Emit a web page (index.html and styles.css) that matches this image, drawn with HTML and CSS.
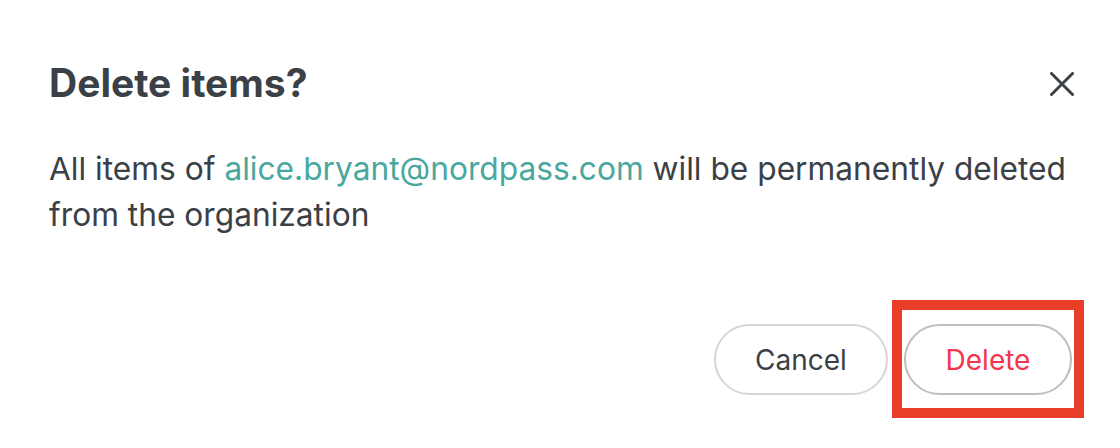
FILE: index.html
```html
<!DOCTYPE html>
<html>
<head>
<meta charset="utf-8">
<link rel="stylesheet" href="styles.css">
</head>
<body>
<div class="dialog">
  <div class="header">
    <h1 class="title">Delete items?</h1>
    <button class="close" aria-label="Close">
      <svg width="24" height="24" viewBox="0 0 24 24"><path d="M1.5 1.5 L22.5 22.5 M22.5 1.5 L1.5 22.5" stroke="#3d4148" stroke-width="3" stroke-linecap="round" fill="none"/></svg>
    </button>
  </div>
  <p class="message">All items of <span class="email">alice.bryant@nordpass.com</span> will be permanently deleted from the organization</p>
  <div class="actions">
    <button class="btn btn-cancel">Cancel</button>
    <div class="highlight-wrap">
      <button class="btn btn-delete">Delete</button>
      <div class="highlight"></div>
    </div>
  </div>
</div>
</body>
</html>
```
FILE: styles.css
```css
* { box-sizing: border-box; }
html, body { margin: 0; padding: 0; background: #fff; }
body { font-family: Inter, "Noto Sans", sans-serif; color: #3b3f46; width: 1120px; height: 448px; overflow: hidden; }
.dialog { padding: 59px 46px 0 49px; }
.header { display: flex; justify-content: space-between; align-items: center; height: 48px; }
.title { margin: 0; font-size: 39px; font-weight: 700; line-height: 48px; color: #3b3f46; }
.close { background: none; border: 0; padding: 0; width: 24px; height: 24px; display: flex; margin-top: 2px; }
.message { margin: 39px 0 0 0; font-size: 31.7px; line-height: 46px; color: #3b3f46; }
.email { color: #4aa79f; }
.actions { display: flex; justify-content: flex-end; gap: 16px; margin-top: 86px; padding-right: 2px; }
.btn { font-family: Inter, "Noto Sans", sans-serif; font-size: 28px; height: 71px; border-radius: 36px; background: #fff; cursor: pointer; padding: 0; }
.btn-cancel { width: 174px; border: 2px solid #d6d6d8; color: #3b3f46; }
.btn-delete { width: 168px; border: 2px solid #bdbdc2; color: #f5344e; }
.highlight-wrap { position: relative; }
.highlight { position: absolute; left: -12px; top: -24px; right: -12px; bottom: -23px; border: 10px solid #e83e28; pointer-events: none; }
```
